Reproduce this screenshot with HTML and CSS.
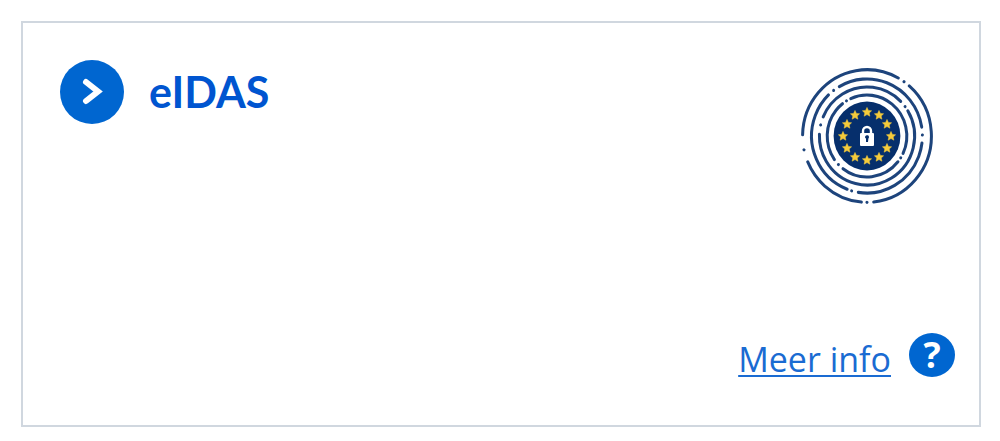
FILE: index.html
```html
<!DOCTYPE html>
<html lang="nl">
<head>
    <meta charset="UTF-8">
    <meta name="viewport" content="width=device-width, initial-scale=1.0">
    <title>eIDAS</title>
    <link rel="stylesheet" href="styles.css">
</head>
<body>
    <main class="card">
        <div class="card-top">
            <a class="login-link" href="#eidas">
                <svg class="arrow" viewBox="0 0 64 64" aria-hidden="true">
                    <circle cx="32" cy="32" r="32" fill="#0066d0"/>
                    <path d="M26 22l12 9.500-12 9.500" fill="none" stroke="#fff" stroke-width="6" stroke-linecap="round"/>
                </svg>
                <span class="login-name">eIDAS</span>
            </a>
            <svg class="logo" viewBox="-67 -70 134 140" aria-hidden="true">
                <defs>
                    <path id="star" d="M0-4.6l1.4 3 3.2.4-2.4 2.2.7 3.2L0 2.6l-2.9 1.6.7-3.2-2.4-2.2 3.2-.4z"/>
                </defs>
                <g transform="scale(1 1.03)">
                    <!-- broken rings, dashes are in degrees -->
                    <g fill="none" stroke="#1d447c" stroke-width="3" stroke-linecap="round">
                        <circle r="64.4" pathLength="360" transform="rotate(-49)" stroke-dasharray="133 6 0 5 62 11 0 13 118 6 0 6"/>
                        <circle r="55.4" pathLength="360" transform="rotate(111)" stroke-dasharray="115 7 0 7 111 8 0 8 92 7 0 5"/>
                        <circle r="47.6" pathLength="360" transform="rotate(-31)" stroke-dasharray="213 11 0 10 112 8 0 6"/>
                        <circle r="39.8" pathLength="360" transform="rotate(39)" stroke-dasharray="88 9 0 9 87 7 0 7 139 7 0 7"/>
                    </g>
                    <circle r="33.4" fill="#062f6c"/>
                </g>
                <g fill="#f5cb3b" stroke="#f5cb3b" stroke-width=".5">
                    <use href="#star" x="0" y="-24"/>
                    <use href="#star" x="12" y="-21"/>
                    <use href="#star" x="20" y="-12"/>
                    <use href="#star" x="24" y="0"/>
                    <use href="#star" x="20" y="12"/>
                    <use href="#star" x="12" y="21"/>
                    <use href="#star" x="0" y="24"/>
                    <use href="#star" x="-12" y="21"/>
                    <use href="#star" x="-20" y="12"/>
                    <use href="#star" x="-24" y="0"/>
                    <use href="#star" x="-20" y="-12"/>
                    <use href="#star" x="-12" y="-21"/>
                </g>
                <path d="M-4-2v-3a4 4 0 0 1 8 0v3" fill="none" stroke="#fff" stroke-width="2.4"/>
                <rect x="-7" y="-3" width="14" height="13" rx="1" fill="#fff"/>
                <path d="M-2 1a2 2 0 1 1 3.400 1.600L1 6H-1V2.600A2 2 0 0 1-2 1z" fill="#062f6c"/>
            </svg>
        </div>
        <div class="card-bottom">
            <a class="more-info" href="#info">Meer info</a>
            <button class="help" type="button" aria-label="Help">?</button>
        </div>
    </main>
</body>
</html>
```
FILE: styles.css
```css
body {
    margin: 0;
    padding: 21px 19px 14px 21px;
    background-color: #fff;
    font-family: "Open Sans", "Noto Sans", sans-serif;
    box-sizing: border-box;
    min-height: 100vh;
    display: flex;
}
.card {
    flex: 1;
    display: flex;
    flex-direction: column;
    justify-content: space-between;
    box-sizing: border-box;
    border: 2px solid #d0d7df;
    padding: 37px 24px 40px 37px;
}
.card-top {
    display: flex;
    justify-content: space-between;
    align-items: flex-start;
}
.login-link {
    display: flex;
    align-items: center;
    gap: 25px;
    color: #0055d0;
    text-decoration: none;
}
.arrow {
    width: 64px;
    height: 64px;
}
.login-name {
    font-family: Lato, sans-serif;
    font-size: 43px;
    font-weight: 700;
    line-height: 64px;
}
.logo {
    width: 134px;
    height: 140px;
    margin: 6px 21px 0 0;
}
.card-bottom {
    display: flex;
    justify-content: flex-end;
    align-items: flex-start;
    gap: 18px;
}
.more-info {
    color: #1a6bd2;
    font-size: 34px;
    font-weight: 400;
    line-height: 52px;
    text-decoration: underline;
    text-decoration-thickness: 2px;
    text-underline-offset: 3px;
    text-decoration-skip-ink: none;
}
.help {
    width: 46px;
    height: 44px;
    padding: 0;
    border: none;
    border-radius: 50%;
    background-color: #0066d0;
    color: #fff;
    font-family: "Open Sans", sans-serif;
    font-size: 36px;
    font-weight: 700;
    line-height: 44px;
    cursor: pointer;
}
```
